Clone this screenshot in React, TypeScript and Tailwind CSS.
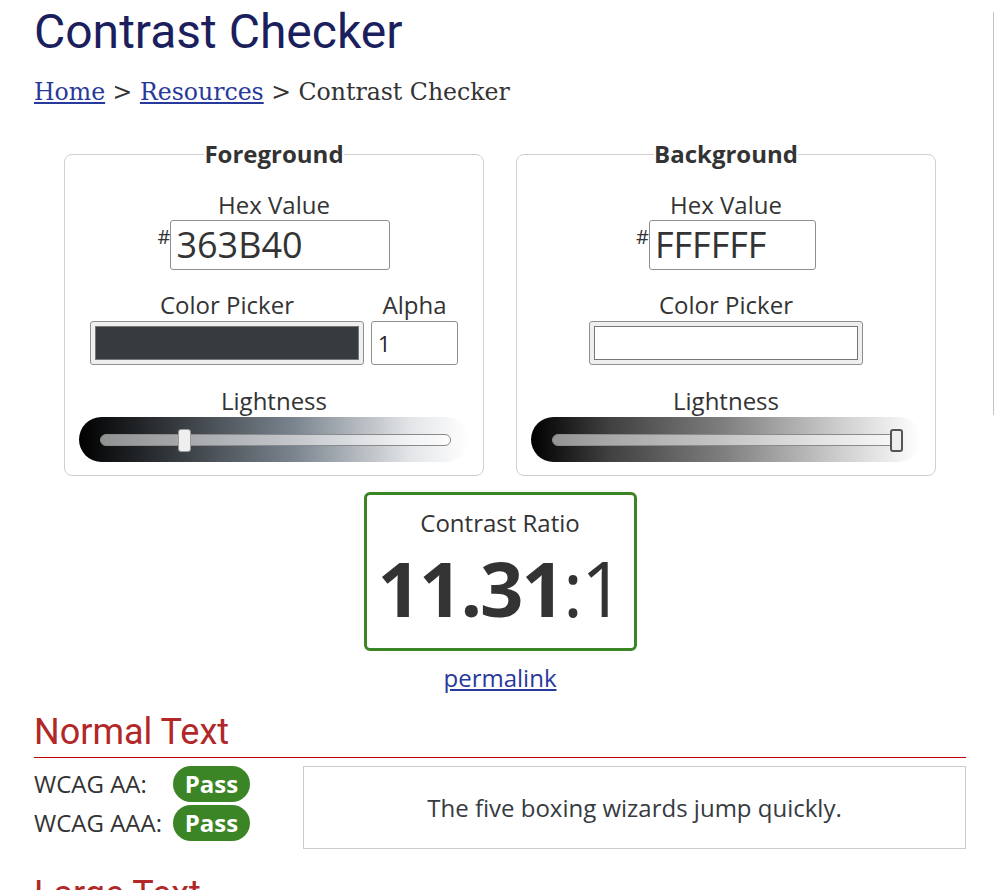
import React from "react";

const body = { fontFamily: '"Open Sans", "Noto Sans", sans-serif' } as const;

function Slider({ gradient, pos, dark }: { gradient: string; pos: number; dark?: boolean }) {
  return (
    <div
      className="relative mx-auto h-[45px] w-[390px] rounded-full"
      style={{ background: gradient }}
    >
      <div className="absolute left-[21px] right-[18px] top-[17px] h-[12px] rounded-full border border-[#8a8a8a] bg-[rgba(255,255,255,0.55)]" />
      <div
        className={
          "absolute top-[12px] h-[23px] w-[13px] rounded-[3px] bg-[#efefef] " +
          (dark ? "border-2 border-[#555]" : "border border-[#9a9a9a]")
        }
        style={{ left: pos }}
      />
    </div>
  );
}

function Panel({
  title,
  hex,
  inputW,
  color,
  alpha,
  gradient,
  pos,
  dark,
}: {
  title: string;
  hex: string;
  inputW: string;
  color: string;
  alpha?: boolean;
  gradient: string;
  pos: number;
  dark?: boolean;
}) {
  return (
    <fieldset className="w-[420px] rounded-[8px] border border-[#cfcfcf] px-0 pb-[13px]">
      <legend className="mx-auto px-0 text-[24px] font-bold leading-[30px] text-[#333]">{title}</legend>
      <div className="mt-[21px] text-center text-[24px] leading-[30px] text-[#333]">Hex Value</div>
      <div className="flex justify-center">
        <span className="mt-[7px] text-[20px] leading-[20px] text-[#333]">#</span>
        <div
          className={
            inputW +
            " flex h-[50px] items-center rounded-[3px] border border-[#8f8f8f] pl-[5px] text-[36px] text-[#333]"
          }
        >
          {hex}
        </div>
      </div>
      <div className="mt-[20px] flex items-end justify-center gap-[7px]">
        <div className="flex flex-col items-center">
          <div className="text-[24px] leading-[30px] text-[#333]">Color Picker</div>
          <div className="mt-[1px] h-[44px] w-[274px] rounded-[3px] border border-[#8f8f8f] bg-[#efefef] p-[4px]">
            <div className="h-full w-full border border-[#777]" style={{ background: color }} />
          </div>
        </div>
        {alpha && (
          <div className="flex flex-col items-center">
            <div className="text-[24px] leading-[30px] text-[#333]">Alpha</div>
            <div className="mt-[1px] flex h-[44px] w-[87px] items-center rounded-[3px] border border-[#8f8f8f] pl-[6px] text-[22px] text-[#222]">
              1
            </div>
          </div>
        )}
      </div>
      <div className="mt-[21px] text-center text-[24px] leading-[30px] text-[#333]">Lightness</div>
      <div className="mt-[1px]">
        <Slider gradient={gradient} pos={pos} dark={dark} />
      </div>
    </fieldset>
  );
}

function PassRow({ label }: { label: string }) {
  return (
    <div className="flex items-center">
      <span className="w-[139px] text-[24px] leading-[30px] text-[#333]">{label}</span>
      <span className="flex h-[36px] w-[77px] items-center justify-center rounded-full bg-[#3b8526] text-[24px] font-bold text-white">
        Pass
      </span>
    </div>
  );
}

export default function App() {
  return (
    <div className="relative min-h-[890px] overflow-hidden bg-white" style={body}>
      <div className="fixed right-0 top-[12px] h-[403px] w-px bg-[#c4c4c4]" />
      <div className="w-[966px] pl-[34px]">
        <h1
          className="pt-[4px] text-[48px] leading-[56px] text-[#1c1f5e]"
          style={{ fontFamily: 'Roboto, "Noto Sans", sans-serif' }}
        >
          Contrast Checker
        </h1>
        <div
          className="mt-[17px] text-[23.6px] leading-[30px] text-[#333]"
          style={{ fontFamily: '"DejaVu Serif", "Liberation Serif", serif' }}
        >
          <a className="text-[#27399a] underline" href="#">Home</a> &gt;{" "}
          <a className="text-[#27399a] underline" href="#">Resources</a> &gt; Contrast Checker
        </div>

        <div className="mt-[32px] flex justify-center gap-[32px]">
          <Panel
            title="Foreground"
            hex="363B40"
            inputW="w-[220px]"
            color="#363B40"
            alpha
            gradient="linear-gradient(to right, #000 0%, #363b40 25%, #7a848e 55%, #e3e5e8 85%, #fff 100%)"
            pos={99}
          />
          <Panel
            title="Background"
            hex="FFFFFF"
            inputW="w-[167px]"
            color="#FFFFFF"
            gradient="linear-gradient(to right, #000 0%, #404040 20%, #808080 50%, #d0d0d0 80%, #fff 100%)"
            pos={359}
            dark
          />
        </div>

        <div className="mt-[16px] flex flex-col items-center">
          <div className="flex h-[159px] w-[273px] flex-col items-center rounded-[6px] border-[3px] border-[#3b8526] text-[#333]">
            <div className="mt-[13px] text-[24px] leading-[30px]">Contrast Ratio</div>
            <div className="mt-[8px] text-[76px] leading-[84px] tracking-[-2px]">
              <span className="font-bold">11.31</span>
              <span>:1</span>
            </div>
          </div>
          <a className="mt-[12px] text-[24px] leading-[30px] text-[#27399a] underline" href="#">
            permalink
          </a>
        </div>

        <h2
          className="mt-[18px] text-[36px] leading-[42px] text-[#b22828]"
          style={{ fontFamily: 'Roboto, "Noto Sans", sans-serif' }}
        >
          Normal Text
        </h2>
        <div className="mt-[4px] h-px bg-red-700" />
        <div className="mt-[8px] flex">
          <div className="flex w-[269px] flex-col gap-[3px]">
            <PassRow label="WCAG AA:" />
            <PassRow label="WCAG AAA:" />
          </div>
          <div className="flex h-[83px] flex-1 items-center justify-center border border-[#cccccc] text-[24px] text-[#363b40]">
            The five boxing wizards jump quickly.
          </div>
        </div>
        <h2
          className="mt-[24px] text-[36px] leading-[42px] text-[#b22828]"
          style={{ fontFamily: 'Roboto, "Noto Sans", sans-serif' }}
        >
          Large Text
        </h2>
      </div>
    </div>
  );
}
